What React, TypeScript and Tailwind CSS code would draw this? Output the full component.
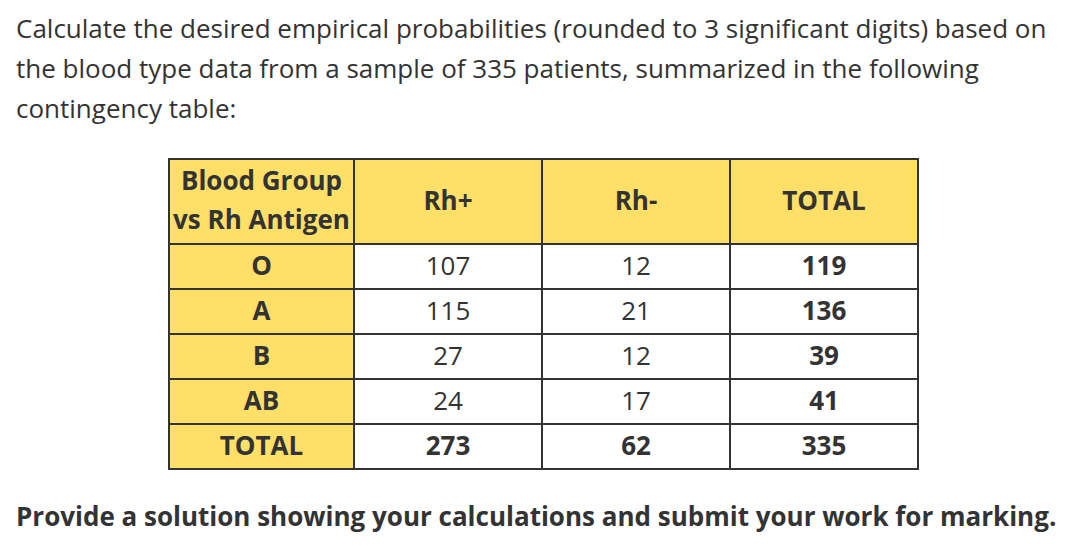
import React from "react";

const rows = [
  { g: "O", p: "107", n: "12", t: "119" },
  { g: "A", p: "115", n: "21", t: "136" },
  { g: "B", p: "27", n: "12", t: "39" },
  { g: "AB", p: "24", n: "17", t: "41" },
];

export default function App() {
  const yellow = "bg-[#fedf67]";
  const cell = "border-2 border-[#333333] leading-[40px] pt-0 pb-[3px] px-0";
  return (
    <div className="w-[1072px] h-[552px] bg-white text-[#333333] font-['Open_Sans',sans-serif] pl-[16px] pt-[8px] overflow-hidden">
      <p className="text-[26px] leading-[40px] w-[1050px]">
        Calculate the desired empirical probabilities (rounded to 3 significant digits) based on the blood type data from a sample of 335 patients, summarized in the following contingency table:
      </p>
      <table className="mt-[30px] ml-[152px] border-collapse border-2 border-[#333333] text-[26px] text-center">
        <colgroup>
          <col className="w-[185px]" />
          <col className="w-[188px]" />
          <col className="w-[188px]" />
          <col className="w-[188px]" />
        </colgroup>
        <thead>
          <tr className="h-[85px]">
            <th className={`${yellow} border-2 border-[#333333] font-bold leading-[39px] pt-0 pb-[3px] px-0`}>
              Blood Group
              <br />
              vs Rh Antigen
            </th>
            <th className={`${yellow} border-2 border-[#333333] font-bold pb-[3px]`}>Rh+</th>
            <th className={`${yellow} border-2 border-[#333333] font-bold pb-[3px]`}>Rh-</th>
            <th className={`${yellow} border-2 border-[#333333] font-bold pb-[3px]`}>TOTAL</th>
          </tr>
        </thead>
        <tbody>
          {rows.map((r) => (
            <tr key={r.g} className="h-[45px]">
              <td className={`${yellow} ${cell} font-bold`}>{r.g}</td>
              <td className={cell}>{r.p}</td>
              <td className={cell}>{r.n}</td>
              <td className={`${cell} font-bold`}>{r.t}</td>
            </tr>
          ))}
          <tr className="h-[45px]">
            <td className={`${yellow} ${cell} font-bold`}>TOTAL</td>
            <td className={`${cell} font-bold`}>273</td>
            <td className={`${cell} font-bold`}>62</td>
            <td className={`${cell} font-bold`}>335</td>
          </tr>
        </tbody>
      </table>
      <p className="mt-[26px] text-[26px] leading-[40px] font-bold whitespace-nowrap">
        Provide a solution showing your calculations and submit your work for marking.
      </p>
    </div>
  );
}
